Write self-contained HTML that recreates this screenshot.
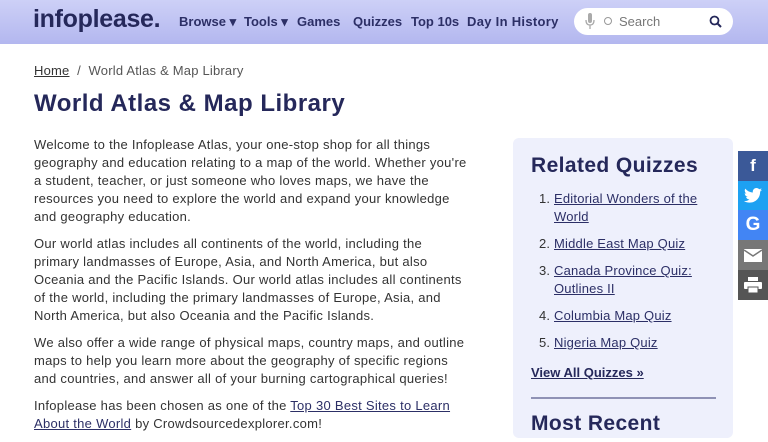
<!DOCTYPE html>
<html><head><meta charset="utf-8"><style>
*{margin:0;padding:0;box-sizing:border-box}
body{width:768px;height:432px;overflow:hidden;background:#fff;font-family:"Liberation Sans",sans-serif;color:#333;position:relative}
.hdr{position:absolute;left:0;top:0;width:768px;height:44px;background:linear-gradient(180deg,#cdd0f7,#b3b7ef)}
.logo{position:absolute;left:33px;top:5px;font-size:25px;font-weight:bold;color:#25285a;letter-spacing:-0.3px}
.nav{position:absolute;top:14px;font-size:13px;font-weight:bold;color:#2c2f66}
.search{position:absolute;left:574px;top:8px;width:159px;height:27px;background:#fff;border-radius:14px}
.bc{position:absolute;left:34px;top:63px;font-size:13px;color:#555;letter-spacing:.2px}
.bc u{color:#333}
h1{position:absolute;left:34px;top:90px;font-size:24px;color:#25285a;font-weight:bold;letter-spacing:.5px}
.main{position:absolute;left:34px;top:136px;width:436px;font-size:13px;line-height:18px;color:#333;letter-spacing:.28px}
.main p{margin-bottom:9px}
.main a{color:#2c2f66}
.side{position:absolute;left:513px;top:138px;width:220px;height:300px;background:#eef0fc;border-radius:6px}
.side h2{position:absolute;left:18px;top:16px;font-size:21px;color:#25285a;letter-spacing:.4px}
.side ol{position:absolute;left:24px;top:52px;width:180px;font-size:13px;line-height:18px;padding-left:17px;color:#333;letter-spacing:.2px}
.side li{margin-bottom:9px}
.side li a{color:#2c2f66}
.va{position:absolute;left:18px;top:227px;font-size:13px;font-weight:bold;color:#25285a;text-decoration:underline}
.rule{position:absolute;left:18px;top:259px;width:185px;height:2px;background:#8f92b5}
.mr{position:absolute;left:18px;top:274px;font-size:21px;font-weight:bold;color:#25285a;letter-spacing:.4px}
.soc{position:absolute;left:738px;width:30px;color:#fff;text-align:center;font-weight:bold;font-size:17px;line-height:30px}
</style></head><body>
<div class="hdr">
<div class="logo">infoplease.</div>
<div class="nav" style="left:179px">Browse ▾</div>
<div class="nav" style="left:244px">Tools ▾</div>
<div class="nav" style="left:297px">Games</div>
<div class="nav" style="left:353px">Quizzes</div>
<div class="nav" style="left:411px">Top 10s</div>
<div class="nav" style="left:467px;letter-spacing:.3px">Day In History</div>
<div class="search">
<svg style="position:absolute;left:11px;top:5px" width="10" height="17" viewBox="0 0 10 17"><rect x="3" y="0" width="4" height="10" rx="2" fill="#aaa"/><path d="M1 7q0 5 4 5t4-5M5 12v4" stroke="#aaa" fill="none" stroke-width="1.3"/></svg>
<div style="position:absolute;left:30px;top:9px;width:8px;height:8px;border:1.2px solid #999;border-radius:50%"></div>
<div style="position:absolute;left:45px;top:6px;font-size:13px;color:#777">Search</div>
<svg style="position:absolute;left:135px;top:7px" width="13" height="13" viewBox="0 0 13 13"><circle cx="5.5" cy="5.5" r="4" stroke="#25285a" stroke-width="1.8" fill="none"/><path d="M8.5 8.5l3.5 3.5" stroke="#25285a" stroke-width="2"/></svg>
</div>
</div>
<div class="bc"><u>Home</u> &nbsp;/ &nbsp;World Atlas &amp; Map Library</div>
<h1>World Atlas &amp; Map Library</h1>
<div class="main">
<p>Welcome to the Infoplease Atlas, your one-stop shop for all things geography and education relating to a map of the world. Whether you're a student, teacher, or just someone who loves maps, we have the resources you need to explore the world and expand your knowledge and geography education.</p>
<p>Our world atlas includes all continents of the world, including the primary landmasses of Europe, Asia, and North America, but also Oceania and the Pacific Islands. Our world atlas includes all continents of the world, including the primary landmasses of Europe, Asia, and North America, but also Oceania and the Pacific Islands.</p>
<p>We also offer a wide range of physical maps, country maps, and outline maps to help you learn more about the geography of specific regions and countries, and answer all of your burning cartographical queries!</p>
<p>Infoplease has been chosen as one of the <a href="#">Top 30 Best Sites to Learn About the World</a> by Crowdsourcedexplorer.com!</p>
</div>
<div class="side">
<h2>Related Quizzes</h2>
<ol>
<li><a href="#">Editorial Wonders of the World</a></li>
<li><a href="#">Middle East Map Quiz</a></li>
<li><a href="#">Canada Province Quiz: Outlines II</a></li>
<li><a href="#">Columbia Map Quiz</a></li>
<li><a href="#">Nigeria Map Quiz</a></li>
</ol>
<div class="va">View All Quizzes »</div>
<div class="rule"></div>
<div class="mr">Most Recent</div>
</div>
<div class="soc" style="top:151px;height:30px;background:#3b5998">f</div>
<div class="soc" style="top:181px;height:29px;background:#1da1f2"><svg width="18" height="15" viewBox="0 0 24 20" style="margin-top:7px"><path d="M24 2.4c-.9.4-1.8.7-2.8.8 1-.6 1.8-1.6 2.2-2.7-1 .6-2 1-3.1 1.2C19.4.7 18.1 0 16.6 0c-2.7 0-4.9 2.2-4.9 4.9 0 .4 0 .8.1 1.1C7.7 5.8 4.1 3.9 1.7 .9c-.4.7-.7 1.6-.7 2.5 0 1.7.9 3.2 2.2 4.1-.8 0-1.6-.2-2.2-.6v.1c0 2.4 1.7 4.4 3.9 4.8-.4.1-.8.2-1.3.2-.3 0-.6 0-.9-.1.6 2 2.4 3.4 4.6 3.4-1.7 1.3-3.8 2.1-6.1 2.1-.4 0-.8 0-1.2-.1 2.2 1.4 4.8 2.2 7.5 2.2 9.1 0 14-7.5 14-14v-.6c1-.7 1.8-1.6 2.5-2.5z" fill="#fff"/></svg></div>
<div class="soc" style="top:210px;height:30px;background:#4285f4;font-size:19px">G</div>
<div class="soc" style="top:240px;height:30px;background:#777"><svg width="18" height="13" viewBox="0 0 18 13" style="margin-top:9px"><rect width="18" height="13" fill="#fff"/><path d="M0 1l9 6 9-6" stroke="#777" stroke-width="1.5" fill="none"/></svg></div>
<div class="soc" style="top:270px;height:30px;background:#555"><svg width="18" height="16" viewBox="0 0 18 16" style="margin-top:7px"><rect x="4" y="0" width="10" height="4" fill="#fff"/><rect x="0" y="5" width="18" height="7" rx="1" fill="#fff"/><rect x="4" y="10" width="10" height="6" fill="#fff" stroke="#555"/></svg></div>
</body></html>
